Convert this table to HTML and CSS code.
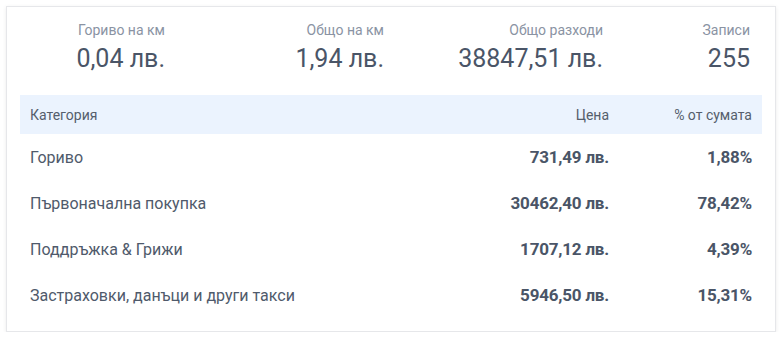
FILE: index.html
```html
<!DOCTYPE html>
<html lang="bg">
<head>
<meta charset="utf-8">
<link rel="stylesheet" href="styles.css">
</head>
<body>
<div class="card">
  <div class="stats">
    <div class="stat"><div class="stat-label">Гориво на км</div><div class="stat-value">0,04 лв.</div></div>
    <div class="stat"><div class="stat-label">Общо на км</div><div class="stat-value">1,94 лв.</div></div>
    <div class="stat"><div class="stat-label">Общо разходи</div><div class="stat-value">38847,51 лв.</div></div>
    <div class="stat"><div class="stat-label">Записи</div><div class="stat-value">255</div></div>
  </div>
  <table class="costs">
    <thead>
      <tr><th class="cat">Категория</th><th class="num">Цена</th><th class="num pct">% от сумата</th></tr>
    </thead>
    <tbody>
      <tr><td class="cat">Гориво</td><td class="num">731,49 лв.</td><td class="num pct">1,88%</td></tr>
      <tr><td class="cat">Първоначална покупка</td><td class="num">30462,40 лв.</td><td class="num pct">78,42%</td></tr>
      <tr><td class="cat">Поддръжка &amp; Грижи</td><td class="num">1707,12 лв.</td><td class="num pct">4,39%</td></tr>
      <tr><td class="cat">Застраховки, данъци и други такси</td><td class="num">5946,50 лв.</td><td class="num pct">15,31%</td></tr>
    </tbody>
  </table>
</div>
</body>
</html>
```
FILE: styles.css
```css
html, body {
  margin: 0;
  background: #ffffff;
}
body {
  padding: 6px 5px 0 6px;
  font-family: Roboto, "Liberation Sans", sans-serif;
  color: #4a5567;
}
.card {
  border: 1px solid #e6e7ea;
  box-shadow: 0 1px 4px rgba(0, 0, 0, 0.08);
  background: #fff;
  padding: 12px 13px 17px 13px;
  height: 326px;
  box-sizing: border-box;
}
.stats {
  display: grid;
  grid-template-columns: 145px 219px 219px 147px;
  text-align: right;
  height: 76px;
}
.stat-label {
  font-size: 14px;
  color: #8a93a3;
  line-height: 20px;
  padding-top: 1px;
}
.stat-value {
  font-size: 25px;
  line-height: 32px;
  margin-top: 3px;
  color: #4a5567;
}
.costs {
  width: 100%;
  border-collapse: collapse;
}
.costs th {
  background: #ebf3fe;
  font-weight: 400;
  font-size: 14px;
  color: #555e6c;
  height: 39px;
  padding: 0 10px;
}
.costs td {
  height: 46px;
  font-size: 16px;
  padding: 0 10px;
}
.cat {
  text-align: left;
}
.num {
  text-align: right;
}
.costs td.num {
  font-weight: 700;
  font-size: 17px;
  letter-spacing: -0.2px;
  color: #4a5567;
}
.pct {
  width: 123px;
}
.costs td.cat {
  color: #4f5a6b;
}
```
